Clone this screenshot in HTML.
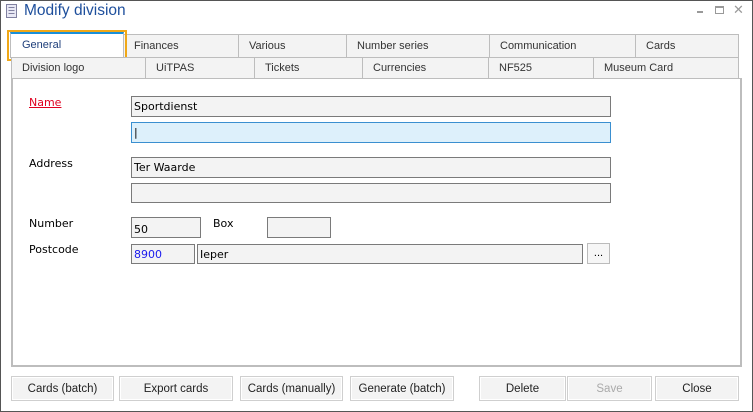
<!DOCTYPE html>
<html><head><style>
*{box-sizing:border-box;margin:0;padding:0}
body{width:753px;height:412px;background:#fff;font-family:"Liberation Sans",sans-serif;font-size:11px;position:relative;overflow:hidden}
.win{position:absolute;left:0;top:0;width:753px;height:412px;border:1px solid #555}
.a{position:absolute}
.tab{position:absolute;background:#f3f3f3;border:1px solid #bdbdbd;color:#333;font-size:11px;padding-top:5px;padding-left:10px;text-align:left}
.inp{position:absolute;background:#f3f3f3;border:1px solid #7a7a7a;font-family:"DejaVu Sans",sans-serif;font-size:11px;padding:3px 0 0 2px;color:#000}
.lbl{position:absolute;font-family:"DejaVu Sans",sans-serif;font-size:11px;color:#000}
.btn{position:absolute;top:376px;height:25px;background:#f3f3f3;border:1px solid #cfcfcf;box-shadow:inset 0 0 0 1px #fff;text-align:center;line-height:25px;color:#222;font-size:11.5px}
</style></head><body>
<div class="win"></div>
<svg class="a" style="left:6px;top:4px" width="12" height="14"><rect x="0.5" y="0.5" width="10" height="13" fill="#e8e8f4" stroke="#8080a0"/><path d="M2.5 3.5h6M2.5 6.5h6M2.5 9.5h6" stroke="#8080a0"/></svg>
<div class="a" style="left:24px;top:2px;font-size:15.5px;color:#1e4f9c">Modify division</div>
<div class="a" style="left:697px;top:11px;width:6px;height:2px;background:#999"></div>
<div class="a" style="left:715px;top:6px;width:9px;height:8px;border:1px solid #999;border-top-width:2px"></div>
<div class="a" style="left:733px;top:2px;color:#999;font-size:13px">✕</div>

<div class="tab" style="left:123px;top:34px;width:116px;height:24px">Finances</div>
<div class="tab" style="left:238px;top:34px;width:109px;height:24px">Various</div>
<div class="tab" style="left:346px;top:34px;width:144px;height:24px">Number series</div>
<div class="tab" style="left:489px;top:34px;width:147px;height:24px">Communication</div>
<div class="tab" style="left:635px;top:34px;width:104px;height:24px">Cards</div>
<div class="tab" style="left:10px;top:32px;width:114px;height:26px;background:#fff;border-top:2px solid #1a8fd8;padding-left:11px;color:#1e3e7a">General</div>
<div class="a" style="left:7px;top:30px;width:120px;height:31px;border:2px solid #f0a818"></div>

<div class="tab" style="left:11px;top:57px;width:135px;height:22px;padding-top:4px">Division logo</div>
<div class="tab" style="left:145px;top:57px;width:110px;height:22px;padding-top:4px">UiTPAS</div>
<div class="tab" style="left:254px;top:57px;width:109px;height:22px;padding-top:4px">Tickets</div>
<div class="tab" style="left:362px;top:57px;width:127px;height:22px;padding-top:4px">Currencies</div>
<div class="tab" style="left:488px;top:57px;width:106px;height:22px;padding-top:4px">NF525</div>
<div class="tab" style="left:593px;top:57px;width:146px;height:22px;padding-top:4px">Museum Card</div>

<div class="a" style="left:11px;top:78px;width:731px;height:289px;border:2px solid #bdbdbd;border-top:1px solid #bdbdbd;background:#fff"></div>

<div class="lbl" style="left:29px;top:96px;color:#e00020;text-decoration:underline">Name</div>
<div class="inp" style="left:131px;top:96px;width:480px;height:21px">Sportdienst</div>
<div class="inp" style="left:131px;top:122px;width:480px;height:21px;background:#ddf0fb;border-color:#3a8fd0">|</div>
<div class="lbl" style="left:29px;top:157px">Address</div>
<div class="inp" style="left:131px;top:157px;width:480px;height:21px">Ter Waarde</div>
<div class="inp" style="left:131px;top:183px;width:480px;height:20px"></div>
<div class="lbl" style="left:29px;top:217px">Number</div>
<div class="inp" style="left:131px;top:217px;width:70px;height:21px;padding-top:5px">50</div>
<div class="lbl" style="left:213px;top:217px">Box</div>
<div class="inp" style="left:267px;top:217px;width:64px;height:21px"></div>
<div class="lbl" style="left:29px;top:243px">Postcode</div>
<div class="inp" style="left:131px;top:244px;width:64px;height:20px;color:#1a1aee">8900</div>
<div class="inp" style="left:197px;top:244px;width:386px;height:20px">Ieper</div>
<div class="a" style="left:587px;top:243px;width:23px;height:21px;border:1px solid #bbb;background:#f6f6f6;text-align:center;line-height:18px">...</div>

<div class="btn" style="left:11px;width:103px">Cards (batch)</div>
<div class="btn" style="left:119px;width:114px">Export cards</div>
<div class="btn" style="left:240px;width:103px">Cards (manually)</div>
<div class="btn" style="left:350px;width:104px">Generate (batch)</div>
<div class="btn" style="left:479px;width:87px">Delete</div>
<div class="btn" style="left:567px;width:85px;color:#aaa">Save</div>
<div class="btn" style="left:655px;width:84px">Close</div>
</body></html>
